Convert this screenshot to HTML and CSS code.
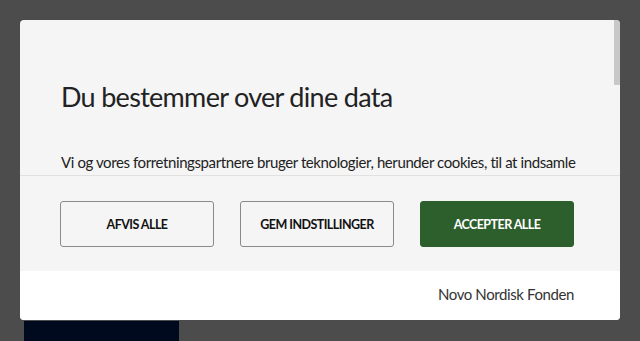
FILE: index.html
```html
<!DOCTYPE html>
<html lang="da">
<head>
<meta charset="utf-8">
<link rel="stylesheet" href="styles.css">
</head>
<body>
<div class="modal">
  <div class="scroll">
    <h1 class="title">Du bestemmer over dine data</h1>
    <p class="text">Vi og vores forretningspartnere bruger teknologier, herunder cookies, til at indsamle oplysninger om dig til forskellige formål, herunder: personalisering af indhold og annoncer, måling af annoncers og indholds effektivitet samt analyse af brugen af hjemmesiden. Ved at trykke på 'Accepter alle' giver du samtykke til alle disse formål. Du kan også vælge at tilkendegive, hvilke formål du vil give samtykke til ved at benytte afkrydsningsfelterne ud for formålet og derefter trykke på 'Gem indstillinger'. Du kan til enhver tid trække dit samtykke tilbage.</p>
  </div>
  <div class="scroll-thumb"></div>
  <div class="actions">
    <button class="btn">AFVIS ALLE</button>
    <button class="btn">GEM INDSTILLINGER</button>
    <button class="btn btn-primary">ACCEPTER ALLE</button>
  </div>
  <div class="footer">Novo Nordisk Fonden</div>
</div>
<div class="page-block"></div>
</body>
</html>
```
FILE: styles.css
```css
html, body {
  margin: 0;
  padding: 0;
  height: 341px;
  overflow: hidden;
}
body {
  background: #4c4c4c;
  font-family: "Lato", "Open Sans", sans-serif;
  color: #222;
  padding-top: 20px;
  box-sizing: border-box;
}
.modal {
  position: relative;
  margin-left: 20px;
  width: 600px;
  height: 300px;
  background: #f5f5f5;
  border-radius: 4px;
  overflow: hidden;
  display: flex;
  flex-direction: column;
}
.scroll {
  height: 155px;
  flex: none;
  overflow: hidden;
  padding: 0 40px 0 41px;
  box-sizing: border-box;
}
.scroll-thumb {
  position: absolute;
  top: 0;
  right: 0;
  width: 6px;
  height: 65px;
  background: #c8c8c8;
  border-radius: 1px;
}
.title {
  margin: 59px 0 0;
  font-size: 27px;
  font-weight: 400;
  letter-spacing: -0.7px;
  line-height: 36px;
  color: #222;
}
.text {
  margin: 38px 0 0;
  font-size: 15px;
  letter-spacing: -0.4px;
  line-height: 18px;
  color: #222;
}
.actions {
  flex: none;
  height: 96px;
  box-sizing: border-box;
  border-top: 1px solid #e1e1e1;
  padding: 25px 46px 24px 40px;
  display: flex;
  gap: 26px;
}
.btn {
  width: 154px;
  height: 46px;
  border: 1px solid #8a8a8a;
  border-radius: 3px;
  background: #f5f5f5;
  font-family: "Lato", "Open Sans", sans-serif;
  font-size: 12.5px;
  font-weight: 700;
  letter-spacing: -0.55px;
  color: #111;
  padding: 0;
  white-space: nowrap;
}
.btn-primary {
  background: #2d5f2d;
  border-color: #2d5f2d;
  color: #fff;
}
.footer {
  flex: 1;
  background: #fff;
  display: flex;
  justify-content: flex-end;
  align-items: flex-start;
  padding: 13px 46px 0 0;
  font-size: 15px;
  letter-spacing: -0.4px;
  line-height: 20px;
  color: #333;
}
.page-block {
  margin: 1px 0 0 24px;
  width: 155px;
  height: 20px;
  background: #000a1f;
}
```
